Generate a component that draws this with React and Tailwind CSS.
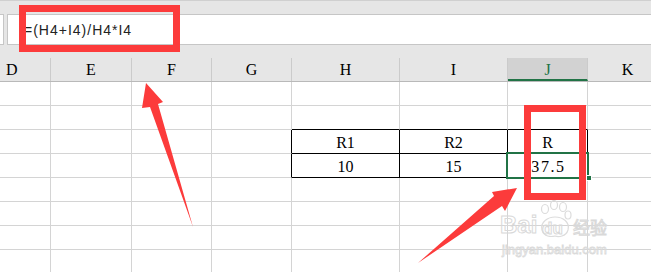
import React from "react";

const cols = [
  { key: "D", w: "w-[51px]", align: "justify-start pl-[6px]" },
  { key: "E", w: "w-[81px]", align: "justify-center" },
  { key: "F", w: "w-[80px]", align: "justify-center" },
  { key: "G", w: "w-[80px]", align: "justify-center" },
  { key: "H", w: "w-[108px]", align: "justify-center" },
  { key: "I", w: "w-[108px]", align: "justify-center" },
  { key: "J", w: "w-[80px]", align: "justify-center" },
  { key: "K", w: "w-[80px]", align: "justify-center" },
];

const tableCols = ["H", "I", "J"];

function cellText(r, c) {
  if (r === 2) {
    if (c === "H") return "R1";
    if (c === "I") return "R2";
    if (c === "J") return "R";
  }
  if (r === 3) {
    if (c === "H") return "10";
    if (c === "I") return "15";
    if (c === "J") return "37.5";
  }
  return "";
}

function Cell({ r, c }) {
  const inTable = r === 2 || r === 3;
  const black =
    (tableCols.includes(c.key) && (r === 1 || r === 2 || r === 3)) ;
  const bottomBlack = tableCols.includes(c.key) && (r === 1 || r === 2 || r === 3);
  const rightBlack = inTable && (c.key === "G" || tableCols.includes(c.key));
  const txt = cellText(r, c.key);
  return (
    <div
      className={
        "shrink-0 h-[24px] box-border flex items-center pt-[3px] " +
        c.w +
        " justify-center border-r border-b " +
        (rightBlack ? "border-r-black " : "border-r-[#d4d4d4] ") +
        (bottomBlack ? "border-b-black" : "border-b-[#d4d4d4]")
      }
    >
      {txt && (
        <span
          className={
            "text-[16px] leading-none text-black font-['Liberation_Serif',serif] " +
            (txt === "37.5" ? "tracking-[1.6px] pl-[2px]" : "")
          }
        >
          {txt}
        </span>
      )}
    </div>
  );
}

export default function App() {
  const rows = [0, 1, 2, 3, 4, 5, 6, 7];
  return (
    <div className="w-[651px] h-[272px] relative overflow-hidden bg-white">
      {/* top toolbar strip */}
      <div className="h-[14px] bg-[#e6e6e6] border-t border-[#d0d0d0] box-border" />
      {/* formula bar */}
      <div className="h-[31px] bg-[#e6e6e6] flex">
        <div className="w-[4px] h-full bg-white border-y border-r border-[#c6c6c6] box-border" />
        <div className="w-[3px]" />
        <div className="flex-1 h-full bg-white border-y border-l border-[#c6c6c6] box-border flex items-center pl-[16px] pt-[1px]">
          <span className="text-[14px] tracking-[1px] text-[#222] font-['Liberation_Sans',sans-serif]">
            =(H4+I4)/H4*I4
          </span>
        </div>
      </div>
      <div className="h-[13px] bg-[#e6e6e6]" />
      {/* column header */}
      <div className="h-[24px] flex bg-[#e6e6e6] border-b border-[#b9b9b9] box-border">
        {cols.map((c) => (
          <div
            key={c.key}
            className={
              "shrink-0 h-full box-border flex items-center border-r border-[#cbcbcb] " +
              c.w +
              " " +
              c.align +
              (c.key === "J" ? " bg-[#d2d2d2] border-b-2 border-b-[#217346] pt-[2px]" : "")
            }
          >
            <span
              className={
                "text-[16px] leading-none font-['Liberation_Serif',serif] " +
                (c.key === "J" ? "text-[#217346]" : "text-black")
              }
            >
              {c.key}
            </span>
          </div>
        ))}
      </div>
      {/* grid */}
      <div className="flex flex-col">
        {rows.map((r) => (
          <div key={r} className="flex">
            {cols.map((c) => (
              <Cell key={c.key} r={r} c={c} />
            ))}
          </div>
        ))}
      </div>

      {/* selection on J4 */}
      <div className="absolute left-[506px] top-[152px] w-[83px] h-[27px] border-2 border-[#217346] box-border" />
      <div className="absolute left-[586px] top-[175px] w-[6px] h-[6px] bg-[#217346] border border-white box-border" />

      {/* watermark */}
      <div className="absolute left-[500px] top-[213px] text-[24px] font-bold leading-none font-['Liberation_Sans',sans-serif] text-transparent [-webkit-text-stroke:1px_#d9d9d9]">
        Bai
      </div>
      <svg className="absolute left-[536px] top-[200px]" width="38" height="40" viewBox="0 0 38 40">
        <g fill="none" stroke="#dcdcdc" strokeWidth="1.2">
          <ellipse cx="9" cy="9" rx="3.5" ry="4.5" />
          <ellipse cx="18" cy="5" rx="3.5" ry="4.5" />
          <ellipse cx="27" cy="7" rx="3.5" ry="4.5" />
          <ellipse cx="32" cy="15" rx="3" ry="4" />
          <path d="M6 30 C4 22 12 17 19 17 C27 17 34 22 32 30 C30 37 22 37 19 36 C15 37 8 37 6 30 Z" />
        </g>
      </svg>
      <div className="absolute left-[542px] top-[220px] text-[17px] font-bold leading-none font-['Liberation_Sans',sans-serif] text-transparent [-webkit-text-stroke:1px_#d9d9d9]">
        du
      </div>
      <div className="absolute left-[573px] top-[218px] text-[17px] leading-none font-['Noto_Sans_CJK_SC',sans-serif] text-transparent [-webkit-text-stroke:1px_#d9d9d9]">
        经验
      </div>
      <div className="absolute left-[502px] top-[243px] text-[13px] leading-none font-['Liberation_Sans',sans-serif] text-transparent [-webkit-text-stroke:0.8px_#dadada]">
        jingyan.baidu.com
      </div>

      {/* red boxes */}
      <div className="absolute left-[19px] top-[5px] w-[161px] h-[47px] border-[7px] border-[#fc3b3b] box-border" />
      <div className="absolute left-[524px] top-[105px] w-[62px] h-[95px] border-[7px] border-[#fc3b3b] box-border" />

      {/* arrows */}
      <svg className="absolute left-0 top-0" width="651" height="272" viewBox="0 0 651 272">
        <polygon
          fill="#fc3b3b"
          points="146,83 163,102 158,104 193,227 150,107 142,108"
        />
        <polygon
          fill="#fc3b3b"
          points="517,188 505,211 502,206 418,263 494,196 492,192"
        />
      </svg>
    </div>
  );
}
